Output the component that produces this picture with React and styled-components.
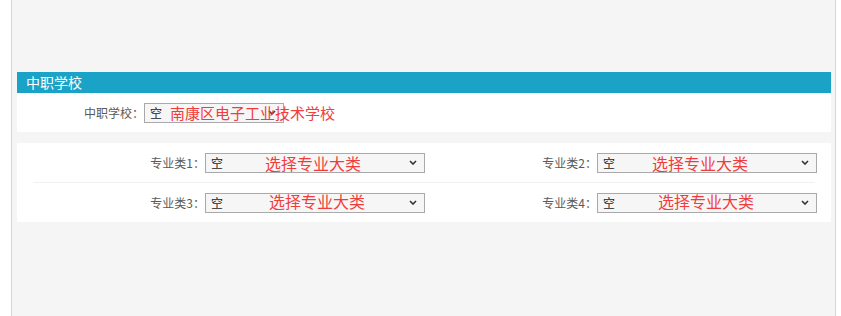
import React from 'react'
import styled, { createGlobalStyle } from 'styled-components'

const majors = [
  [
    { label: '专业类1：', note: '选择专业大类', dx: 59, dy: 0 },
    { label: '专业类2：', note: '选择专业大类', dx: 54, dy: 0 },
  ],
  [
    { label: '专业类3：', note: '选择专业大类', dx: 63, dy: -2 },
    { label: '专业类4：', note: '选择专业大类', dx: 60, dy: -2 },
  ],
]

const Chevron = () => (
  <svg width="8" height="5" viewBox="0 0 8 5">
    <path d="M1 1 L4 4 L7 1" fill="none" stroke="#333" strokeWidth="1.6" />
  </svg>
)

const Select = ({ width, note, dx, dy, size }) => (
  <SelectBox width={width}>
    <SelectText>空</SelectText>
    <Chevron />
    {note && (
      <Note $dx={dx} $dy={dy} $size={size}>
        {note}
      </Note>
    )}
  </SelectBox>
)

class App extends React.Component {
  render() {
    return (
      <Frame>
        <GlobalStyle />
        <Header>中职学校</Header>
        <Panel>
          <Row>
            <Field>
              <Label width={111}>中职学校：</Label>
              <Select width={140} note="南康区电子工业技术学校" dx={25} dy={-1} size={15} />
            </Field>
          </Row>
        </Panel>
        <Panel $gap>
          {majors.map((row, i) => (
            <Row key={i} $divided={i > 0}>
              {row.map((f) => (
                <Field key={f.label} $col>
                  <Label width={172}>{f.label}</Label>
                  <Select width={220} note={f.note} dx={f.dx} dy={f.dy} size={16} />
                </Field>
              ))}
            </Row>
          ))}
        </Panel>
      </Frame>
    )
  }
}

const GlobalStyle = createGlobalStyle`
  html, body {
    margin: 0;
    padding: 0;
    background: #fff;
  }
  body {
    font-family: "Noto Sans CJK SC", "Noto Sans", sans-serif;
  }
`

const Frame = styled.div`
  box-sizing: border-box;
  margin-left: 11px;
  width: 825px;
  height: 316px;
  padding: 72px 4px 0 5px;
  background: #f5f5f5;
  border-left: 1px solid #d6d6d6;
  border-right: 1px solid #d6d6d6;
`

const Header = styled.div`
  height: 21px;
  line-height: 21px;
  padding-left: 9px;
  background: #1ba2c7;
  color: #fff;
  font-size: 14px;
`

const Panel = styled.div`
  background: #fff;
  padding: 0 16px;
  margin-top: ${(p) => (p.$gap ? '11px' : '0')};
`

const Row = styled.div`
  display: flex;
  height: 39px;
  align-items: center;
  border-top: ${(p) => (p.$divided ? '1px solid #f0f0f0' : 'none')};
`

const Field = styled.div`
  display: flex;
  align-items: center;
  flex: ${(p) => (p.$col ? '0 0 390px' : 'none')};
`

const Label = styled.div`
  flex: none;
  width: ${(p) => p.width}px;
  text-align: right;
  font-size: 12px;
  color: #5a5a5a;
  white-space: nowrap;
`

const SelectBox = styled.div`
  position: relative;
  flex: none;
  box-sizing: border-box;
  display: flex;
  align-items: center;
  justify-content: space-between;
  width: ${(p) => p.width}px;
  height: 20px;
  padding: 0 7px 0 5px;
  background: #f6f6f6;
  border: 1px solid #a9a9a9;
`

const SelectText = styled.span`
  font-size: 12px;
  color: #222;
`

const Note = styled.span`
  position: absolute;
  left: ${(p) => p.$dx}px;
  top: 50%;
  transform: translateY(calc(-50% + ${(p) => p.$dy}px));
  font-size: ${(p) => p.$size}px;
  color: #f23c3c;
  white-space: nowrap;
  line-height: 1;
`

export default App
